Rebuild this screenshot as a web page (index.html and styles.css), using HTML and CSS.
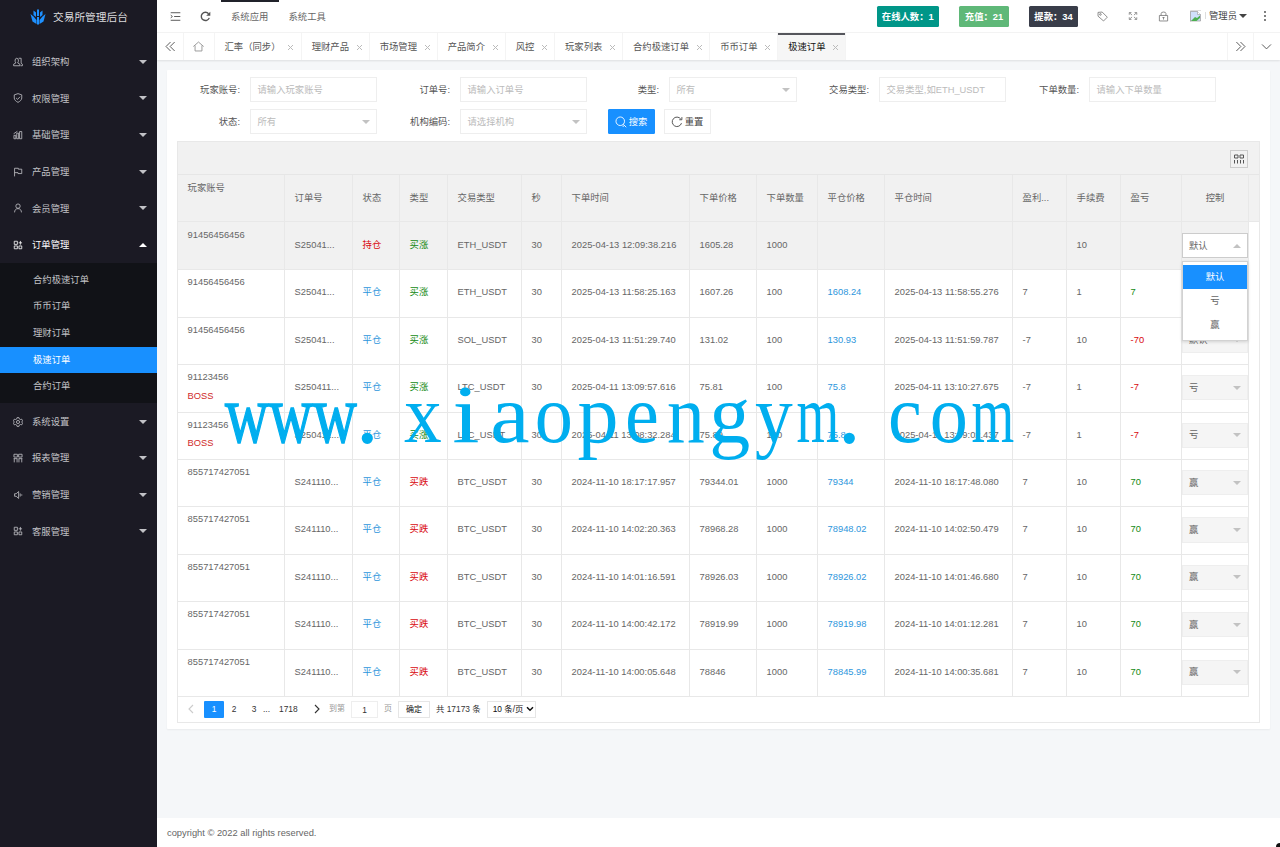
FILE: index.html
```html
<!DOCTYPE html>
<html lang="zh-CN">
<head>
<meta charset="utf-8">
<title>交易所管理后台</title>
<link rel="stylesheet" href="styles.css">
</head>
<body>
<div class="app">
<aside class="side">
  <div class="logo"><svg width="16" height="16" viewBox="0 0 16 16"><g fill="#1e90ff"><path d="M7 0.5l2 0v6.5h-2z"/><path d="M3.5 1.5l2.5 2v4.5L3.5 6z"/><path d="M12.500 1.500L10 3.500V8l2.500-2z"/><path d="M.5 5l3 2.500L6.500 11v4L2.500 12.500z"/><path d="M15.500 5l-3 2.500L9.500 11v4l4-2.500z"/><path d="M7 8h2v7.500H7z"/></g></svg><span>交易所管理后台</span></div>
  <nav class="menu">
    <div class="item"><svg class="ic" viewBox="0 0 16 16"><path d="M1 14v-2.500l3.500-2C2.500 7 3 2 6 2s3.500 5 1.500 7.500l3.500 2V14zM9 2h4v8l2 1.500V14H12"/></svg><span>组织架构</span><b class="dn"></b></div>
    <div class="item"><svg class="ic" viewBox="0 0 16 16"><path d="M8 1l6 2v5c0 3-3 5.500-6 7-3-1.500-6-4-6-7V3zM5 8l2.300 2.200L11.300 6"/></svg><span>权限管理</span><b class="dn"></b></div>
    <div class="item"><svg class="ic" viewBox="0 0 16 16"><path d="M1.500 14V8.500h3V14zM6 14V5h3v9zM10.500 14V2.500h3.500V14zM1 6l6-4"/></svg><span>基础管理</span><b class="dn"></b></div>
    <div class="item"><svg class="ic" viewBox="0 0 16 16"><path d="M2.500 15V2h6v1.500H14v7H8V9H2.500"/></svg><span>产品管理</span><b class="dn"></b></div>
    <div class="item"><svg class="ic" viewBox="0 0 16 16"><circle cx="8" cy="5" r="3.500"/><path d="M2.500 15c0-3.500 2-6 5.500-6s5.500 2.500 5.500 6"/></svg><span>会员管理</span><b class="dn"></b></div>
    <div class="item open"><svg class="ic" viewBox="0 0 16 16"><path d="M2 2h5v5H2zM2 9.500h5V14H2zM9.500 9.500H14V14H9.500zM9 4.500h5.500M11.800 1.500v6"/></svg><span>订单管理</span><b class="up"></b></div>
    <div class="sub"><div>合约极速订单</div><div>币币订单</div><div>理财订单</div><div class="on">极速订单</div><div>合约订单</div></div>
    <div class="item"><svg class="ic" viewBox="0 0 16 16"><path d="M6.500 1h3l.5 2 2 1 2-.5 1.300 2.500L14 8l1.300 2-1.300 2.500-2-.5-2 1-.5 2h-3L6 13l-2-1-2 .5L.7 10 2 8 .7 6 2 3.500 4 4l2-1z"/><circle cx="8" cy="8" r="2.500"/></svg><span>系统设置</span><b class="dn"></b></div>
    <div class="item"><svg class="ic" viewBox="0 0 16 16"><path d="M1.500 2H7v4.500H1.500zM9 2h5.500v4.500H9zM2 9v6M6.500 9v6M9.500 9v6M14 9v6M1 9h6M9 9h6"/></svg><span>报表管理</span><b class="dn"></b></div>
    <div class="item"><svg class="ic" viewBox="0 0 16 16"><path d="M2.500 6v4H5l4 3.500v-11L5 6zM11.500 5.500v5M14 7v2"/></svg><span>营销管理</span><b class="dn"></b></div>
    <div class="item"><svg class="ic" viewBox="0 0 16 16"><path d="M2 2h5v5H2zM2 9.500h5V14H2zM9.500 9.500H14V14H9.500zM9 4.500h5.500M11.800 1.500v6"/></svg><span>客服管理</span><b class="dn"></b></div>
  </nav>
</aside>
<div class="main">
  <header class="top">
    <svg class="hi fold" viewBox="0 0 16 16"><path d="M1 2.500h14M6 8h9M1 13.500h14M1 6l2.500 2L1 10"/></svg>
    <svg class="hi reload" viewBox="0 0 16 16"><path stroke-width="2" d="M13.500 10A6 6 0 1 1 12.500 4"/><path fill="#555" stroke="none" d="M15 1v6H9z"/></svg>
    <div class="nav on">系统应用</div><div class="nav">系统工具</div>
    <div class="right">
      <div class="stat s1">在线人数：1</div><div class="stat s2">充值：21</div><div class="stat s3">提款：34</div>
      <svg class="hi t1" viewBox="0 0 16 16"><path d="M1.500 2l6-.5L15 9l-5.500 5.500L1.500 7.500z"/><circle cx="5" cy="5" r="1.200"/></svg>
      <svg class="hi t2" viewBox="0 0 16 16"><path d="M2 6V2.500h3.500M2.500 3l4 3.500M14 6V2.500h-3.500M13.500 3l-4 3.500M2 10v3.500h3.500M2.500 13l4-3.500M14 10v3.500h-3.500M13.500 13l-4-3.500"/></svg>
      <svg class="hi t3" viewBox="0 0 16 16"><path d="M2 6.500h12v8H2zM4.500 6.500V4q0-2.500 3.500-2.500t3.500 2V6.500M8 9v3.500M6.500 9.500h3"/></svg>
      <div class="user"><svg width="17" height="13" viewBox="0 0 17 13"><path d="M12 .5H1.500V12M16.500 2v7" fill="none" stroke="#ddd"/><path d="M1.500 1.500h7l3 3V11h-10z" fill="#cfe0fb" stroke="#999" stroke-width=".7"/><path d="M8.500 1.500v3h3" fill="#fff" stroke="#999" stroke-width=".6"/><path d="M2 11l4-4 2 1 3-2.500V8l-3.500 3z" fill="#4caf50"/></svg><span>管理员</span><b class="dn"></b></div>
      <svg class="dots" width="4" height="12" viewBox="0 0 4 12"><g fill="#444"><circle cx="2" cy="2" r=".9"/><circle cx="2" cy="6" r=".9"/><circle cx="2" cy="10" r=".9"/></g></svg>
    </div>
  </header>
  <div class="tabs">
    <div class="ctl c1"><svg class="hi" viewBox="0 0 16 16"><path d="M8 1.500L1.500 8 8 14.500M14 1.500L7.500 8l6.500 6.500"/></svg></div>
    <div class="ctl c2"><svg class="hi home" viewBox="0 0 16 16"><path d="M.5 8L8 1.500 15.500 8M3 6.500v8h10v-8"/></svg></div>
    <div class="tab w6"><span>汇率（同步）</span><i></i></div><div class="tab"><span>理财产品</span><i></i></div><div class="tab"><span>市场管理</span><i></i></div><div class="tab"><span>产品简介</span><i></i></div><div class="tab w2"><span>风控</span><i></i></div><div class="tab"><span>玩家列表</span><i></i></div><div class="tab w6"><span>合约极速订单</span><i></i></div><div class="tab"><span>币币订单</span><i></i></div><div class="tab on"><span>极速订单</span><i></i></div>
    <div class="ctl c3"><svg class="hi" viewBox="0 0 16 16"><path d="M2 1.500L8.500 8 2 14.500M8 1.500L14.500 8 8 14.500"/></svg></div>
    <div class="ctl c4"><svg class="hi" viewBox="0 0 16 16"><path d="M1.500 5L8 11.500 14.500 5"/></svg></div>
  </div>
  <main class="card">
    <div class="form">
      <label>玩家账号:</label><div class="inp">请输入玩家账号</div>
      <label>订单号:</label><div class="inp">请输入订单号</div>
      <label>类型:</label><div class="inp">所有<b class="dn"></b></div>
      <label>交易类型:</label><div class="inp">交易类型,如ETH_USDT</div>
      <label>下单数量:</label><div class="inp">请输入下单数量</div>
      <label>状态:</label><div class="inp">所有<b class="dn"></b></div>
      <label>机构编码:</label><div class="inp">请选择机构<b class="dn"></b></div>
      <div class="btns"><div class="btn pri"><svg viewBox="0 0 16 16"><circle cx="7" cy="7" r="5.700"/><path d="M11 11l4 4M10 13.500h2"/></svg>搜索</div><div class="btn"><svg viewBox="0 0 16 16"><path d="M14 9.500A6.300 6.300 0 1 1 13 4M14.500 1.500V5H11"/></svg>重置</div></div>
    </div>
    <section class="grid">
      <div class="tool"><div class="cols"><svg width="12" height="12" viewBox="0 0 12 12"><path d="M1.500 2h3.500v3H1.500zM7 2h3.500v3H7zM1.500 7v3.500M4.500 7v3.500M7.500 7v3.500M10.500 7v3.500" fill="none" stroke="#555"/></svg></div></div>
      <div class="row head"><span>玩家账号</span><span>订单号</span><span>状态</span><span>类型</span><span>交易类型</span><span>秒</span><span>下单时间</span><span>下单价格</span><span>下单数量</span><span>平仓价格</span><span>平仓时间</span><span>盈利...</span><span>手续费</span><span>盈亏</span><span class="mid">控制</span></div>
      <div class="row hov"><span>91456456456</span><span>S25041...</span><span class="red">持仓</span><span class="green">买涨</span><span>ETH_USDT</span><span>30</span><span>2025-04-13 12:09:38.216</span><span>1605.28</span><span>1000</span><span></span><span></span><span></span><span>10</span><span></span><span class="ct"><div class="sel act">默认<b class="up"></b><div class="drop"><div class="on">默认</div><div>亏</div><div>赢</div></div></div></span></div>
      <div class="row"><span>91456456456</span><span>S25041...</span><span class="blue">平仓</span><span class="green">买涨</span><span>ETH_USDT</span><span>30</span><span>2025-04-13 11:58:25.163</span><span>1607.26</span><span>100</span><span class="blue">1608.24</span><span>2025-04-13 11:58:55.276</span><span>7</span><span>1</span><span class="green">7</span><span class="ct"><div class="sel"><b class="dn"></b></div></span></div>
      <div class="row"><span>91456456456</span><span>S25041...</span><span class="blue">平仓</span><span class="green">买涨</span><span>SOL_USDT</span><span>30</span><span>2025-04-13 11:51:29.740</span><span>131.02</span><span>100</span><span class="blue">130.93</span><span>2025-04-13 11:51:59.787</span><span>-7</span><span>10</span><span class="red">-70</span><span class="ct"><div class="sel">默认<b class="dn"></b></div></span></div>
      <div class="row"><span>91123456<br><em>BOSS</em></span><span>S250411...</span><span class="blue">平仓</span><span class="green">买涨</span><span>LTC_USDT</span><span>30</span><span>2025-04-11 13:09:57.616</span><span>75.81</span><span>100</span><span class="blue">75.8</span><span>2025-04-11 13:10:27.675</span><span>-7</span><span>1</span><span class="red">-7</span><span class="ct"><div class="sel">亏<b class="dn"></b></div></span></div>
      <div class="row"><span>91123456<br><em>BOSS</em></span><span>S250411...</span><span class="blue">平仓</span><span class="green">买涨</span><span>LTC_USDT</span><span>30</span><span>2025-04-11 13:08:32.284</span><span>75.89</span><span>100</span><span class="blue">75.8</span><span>2025-04-11 13:09:02.437</span><span>-7</span><span>1</span><span class="red">-7</span><span class="ct"><div class="sel">亏<b class="dn"></b></div></span></div>
      <div class="row"><span>855717427051</span><span>S241110...</span><span class="blue">平仓</span><span class="red">买跌</span><span>BTC_USDT</span><span>30</span><span>2024-11-10 18:17:17.957</span><span>79344.01</span><span>1000</span><span class="blue">79344</span><span>2024-11-10 18:17:48.080</span><span>7</span><span>10</span><span class="green">70</span><span class="ct"><div class="sel">赢<b class="dn"></b></div></span></div>
      <div class="row"><span>855717427051</span><span>S241110...</span><span class="blue">平仓</span><span class="red">买跌</span><span>BTC_USDT</span><span>30</span><span>2024-11-10 14:02:20.363</span><span>78968.28</span><span>1000</span><span class="blue">78948.02</span><span>2024-11-10 14:02:50.479</span><span>7</span><span>10</span><span class="green">70</span><span class="ct"><div class="sel">赢<b class="dn"></b></div></span></div>
      <div class="row"><span>855717427051</span><span>S241110...</span><span class="blue">平仓</span><span class="red">买跌</span><span>BTC_USDT</span><span>30</span><span>2024-11-10 14:01:16.591</span><span>78926.03</span><span>1000</span><span class="blue">78926.02</span><span>2024-11-10 14:01:46.680</span><span>7</span><span>10</span><span class="green">70</span><span class="ct"><div class="sel">赢<b class="dn"></b></div></span></div>
      <div class="row"><span>855717427051</span><span>S241110...</span><span class="blue">平仓</span><span class="red">买跌</span><span>BTC_USDT</span><span>30</span><span>2024-11-10 14:00:42.172</span><span>78919.99</span><span>1000</span><span class="blue">78919.98</span><span>2024-11-10 14:01:12.281</span><span>7</span><span>10</span><span class="green">70</span><span class="ct"><div class="sel">赢<b class="dn"></b></div></span></div>
      <div class="row"><span>855717427051</span><span>S241110...</span><span class="blue">平仓</span><span class="red">买跌</span><span>BTC_USDT</span><span>30</span><span>2024-11-10 14:00:05.648</span><span>78846</span><span>1000</span><span class="blue">78845.99</span><span>2024-11-10 14:00:35.681</span><span>7</span><span>10</span><span class="green">70</span><span class="ct"><div class="sel">赢<b class="dn"></b></div></span></div>
      <div class="pager">
        <svg class="arr" viewBox="0 0 8 10"><path d="M6 1L2 5l4 4" stroke="#ccc"/></svg>
        <span class="pg cur">1</span><span class="pg">2</span><span class="pg">3</span><span class="more">...</span><span class="last">1718</span>
        <svg class="arr next" viewBox="0 0 8 10"><path d="M2 1l4 4-4 4" stroke="#333"/></svg>
        <span class="go">到第</span><span class="num">1</span><span class="ye">页</span><span class="ok">确定</span><span class="tot">共 17173 条</span><span class="lim">10 条/页<svg width="8" height="6" viewBox="0 0 8 6"><path d="M1 1.200l3 3 3-3" fill="none" stroke="#111" stroke-width="1.500"/></svg></span>
      </div>
    </section>
  </main>
  <footer>copyright © 2022 all rights reserved.</footer>
</div>
<div class="mark"><span class="w">w</span><span class="w">w</span><span class="w">w</span><span class="p">.</span><span class="x">x</span><span class="i">i</span><span class="a">a</span><span class="o">o</span><span>p</span><span class="o">e</span><span class="x">n</span><span>g</span><span class="x">y</span><span class="m">m</span><span class="p">.</span><span class="o">c</span><span class="o">o</span><span class="m">m</span></div>
<div class="corner"></div>
</div>
</body>
</html>
```
FILE: styles.css
```css
* { box-sizing: border-box; }
body { margin: 0; overflow: hidden; background: #f5f7f9; color: #666; font: 9.33px/18.4px "Liberation Sans", "Noto Sans CJK SC", sans-serif; }
.app { display: flex; width: 1280px; height: 847px; position: relative; overflow: hidden; }
svg { flex: none; }
.dn, .up { width: 0; height: 0; border: 4px solid transparent; flex: none; }
.dn { border-top-color: currentColor; border-bottom: 0; }
.up { border-bottom-color: currentColor; border-top: 0; }

.side { width: 157px; background: #1b1a24; color: #c2c2c6; flex: none; }
.logo { height: 33.3px; display: flex; align-items: center; padding: 1px 0 0 30px; gap: 7px; color: #dcdcde; font-size: 10.7px; }
.menu { padding-top: 10px; }
.item { height: 36.67px; display: flex; align-items: center; padding: 0 10px 0 13px; }
.item span { flex: 1; margin-left: 9px; padding-top: 1px; }
.item.open { color: #fff; }
.ic { width: 10px; height: 10px; fill: none; stroke: currentColor; stroke-width: 1.3; }
.sub { background: #111217; padding: 3.33px 0; }
.sub div { height: 26.67px; line-height: 27.5px; padding-left: 33px; }
.sub .on { background: #1890ff; color: #fff; }

.main { flex: 1; display: flex; flex-direction: column; min-width: 0; }
.top { height: 33.3px; background: #fff; display: flex; align-items: center; border-bottom: 1px solid #f4f4f4; flex: none; }
.hi { width: 11px; height: 11px; fill: none; stroke: #555; stroke-width: 1.4; }
.fold { margin-left: 13px; }
.reload { margin: 0 10px 0 19px; }
.nav { height: 33px; line-height: 34.5px; padding: 0 10px; width: 57.5px; }
.nav.on { border-top: 2px solid #20222a; line-height: 30.5px; }
.right { margin-left: auto; display: flex; align-items: center; height: 33px; }
.stat { height: 21px; line-height: 22px; border-radius: 1.5px; color: #fff; font-weight: 700; text-align: center; margin-right: 20px; }
.s1 { width: 62.500px; background: #009688; }
.s2 { width: 50px; background: #5fb878; }
.s3 { width: 49px; background: #393d49; margin-right: 19px; }
.t1, .t2, .t3 { stroke: #777; stroke-width: 1.2; margin-right: 20px; }
.t2 { width: 10px; height: 10px; }
.t3 { margin-right: 20px; }
.user { display: flex; align-items: center; color: #444; }
.user span { margin: 0 2px 0 3px; padding-top: 1px; }
.dots { margin: 0 13px 0 16px; }

.tabs { height: 26.7px; display: flex; background: #fff; box-shadow: 0 1px 2px rgba(0, 0, 0, .1); flex: none; }
.ctl { display: flex; align-items: center; justify-content: center; border-right: 1px solid #f4f4f4; }
.c1 { width: 27px; }
.c2 { width: 30.500px; }
.home { stroke: #999; }
.c3 { width: 27px; margin-left: auto; border-left: 1px solid #f4f4f4; }
.c4 { width: 26.500px; border: 0; }
.tab { width: 68px; padding: 1px 0 0 10px; display: flex; align-items: center; border-right: 1px solid #f4f4f4; white-space: nowrap; color: #555; }
.tab.w6 { width: 87.200px; }
.tab.w2 { width: 49.300px; }
.tab i { width: 5px; height: 5px; margin-left: 8px; background: linear-gradient(45deg, transparent 43%, #bbb 43% 57%, transparent 57%), linear-gradient(-45deg, transparent 43%, #bbb 43% 57%, transparent 57%); }
.tab.on { background: #f6f6f6; color: #111; box-shadow: inset 0 2px #55565c; }

.card { margin: 10px 10px 0; padding: 7px 10px; height: 659px; background: #fff; box-shadow: 0 1px 2px rgba(0, 0, 0, .05); border-radius: 1px; }
.form { display: grid; row-gap: 6.700px; height: 64px; grid-template-columns: 73px 127px 83px 127px 82px 128px 82px 127px 83px 127px; grid-auto-rows: 25.300px; }
.form label { text-align: right; padding-right: 10px; line-height: 26px; color: #555; }
.inp { border: 1px solid #eee; line-height: 23px; padding: 1px 6.500px 0; color: #bbb; display: flex; align-items: center; justify-content: space-between; white-space: nowrap; }
.btns { grid-column: span 4; display: flex; gap: 9px; padding-left: 21px; }
.btn { width: 47.500px; height: 25.300px; padding-top: 1px; display: flex; align-items: center; justify-content: center; gap: 1.500px; border: 1px solid #eee; color: #444; }
.btn svg { width: 12px; height: 12px; fill: none; stroke: currentColor; stroke-width: 1.2; }
.btn.pri { background: #1890ff; color: #fff; border-color: #1890ff; width: 46.500px; border-radius: 1px; }

.grid { border: 1px solid #e8e8e8; height: 582px; display: flex; flex-direction: column; }
.tool { height: 33px; background: #f1f1f1; border-bottom: 1px solid #e6e6e6; display: flex; align-items: center; justify-content: flex-end; padding: 2px 11px 0 0; flex: none; }
.cols { width: 18px; height: 18px; border: 1px solid #ccc; display: flex; align-items: center; justify-content: center; }
.row { display: grid; grid-template-columns: 107px 68px 47px 48px 74px 40px 128px 67px 61px 67px 128px 54px 54px 61px 67px; width: 1071px; height: 47.400px; flex: none; }
.row > span { border-right: 1px solid #e8e8e8; border-bottom: 1px solid #e8e8e8; padding-left: 9.600px; line-height: 47.400px; white-space: nowrap; min-width: 0; }
.row > span:first-child { line-height: 18.400px; padding-top: 4px; }
.row.head { width: 100%; height: 47px; background: #f1f1f1; border-bottom: 1px solid #e8e8e8; }
.head > span { border-bottom: 0; }
.row > .mid { text-align: center; padding: 0; }
.hov { background: #f1f1f1; }
.red { color: #d9070e; }
.green { color: #138a13; }
.blue { color: #2d96dc; }
em { font-style: normal; color: #d02c2c; }
.row > .ct { padding: 11px 0 0; }
.sel { height: 25.300px; line-height: 24px; background: #f5f5f5; border: 1px solid #eee; padding: 0 6px; display: flex; align-items: center; justify-content: space-between; position: relative; }
.sel > b, .inp > b { color: #c2c2c2; }
.sel > b { margin-left: auto; }
.act { background: #fff; border-color: #ccc; }
.drop { position: absolute; z-index: 3; left: -1px; right: -1px; top: 27px; height: 80px; padding: 3px 0; background: #fff; border: 1px solid #d2d2d2; box-shadow: 0 1px 3px rgba(0, 0, 0, .15); text-align: center; }
.drop .on { background: #1890ff; color: #fff; }

.pager { flex: 1; display: flex; align-items: center; padding-top: 1px; font-size: 8.400px; color: #333; white-space: nowrap; }
.arr { width: 8px; height: 10px; fill: none; stroke-width: 1.1; margin: 0 12px 0 9px; }
.next { margin: 0 8px 0 15px; }
.pg { width: 20px; text-align: center; line-height: 17px; }
.cur { background: #1890ff; color: #fff; border-radius: 1px; margin-left: -3px; }
.more { margin-left: -1px; width: 16px; }
.last { width: 19px; }
.go, .ye { color: #999; font-size: 8px; }
.num { width: 27px; height: 17px; line-height: 16px; border: 1px solid #eee; text-align: center; margin: 0 6px; }
.ok { width: 32px; height: 17px; line-height: 16px; border: 1px solid #e6e6e6; text-align: center; margin: 0 6px; color: #111; font-size: 8px; }
.lim { width: 49px; height: 17px; border: 1px solid #e6e6e6; display: flex; align-items: center; justify-content: space-between; padding: 0 1px 0 5px; margin-left: 6px; color: #111; }

footer { margin-top: auto; height: 29px; line-height: 30px; background: #fff; padding-left: 10px; }

.mark { position: absolute; z-index: 5; left: 225px; top: 368px; display: flex; color: #00aeef; font: 82px/94px "Liberation Serif", serif; height: 94px; }
.mark span { width: 43.900px; display: flex; justify-content: center; }
.mark .w { transform: scaleX(.74); -webkit-text-stroke: 1.5px #00aeef; }
.mark .m { transform: scaleX(.67); }
.mark .x { transform: scaleX(.92); }
.mark .o { transform: scaleX(.93); }
.mark .i { transform: scaleX(1.2); }
.mark .a { transform: scaleX(1.08); }
.mark .p { justify-content: flex-start; transform: scale(1.15); transform-origin: 10px 70px; }
.corner { position: absolute; right: 0; bottom: 0; width: 4px; height: 4px; background: #111; border-top-left-radius: 4px; }
```
